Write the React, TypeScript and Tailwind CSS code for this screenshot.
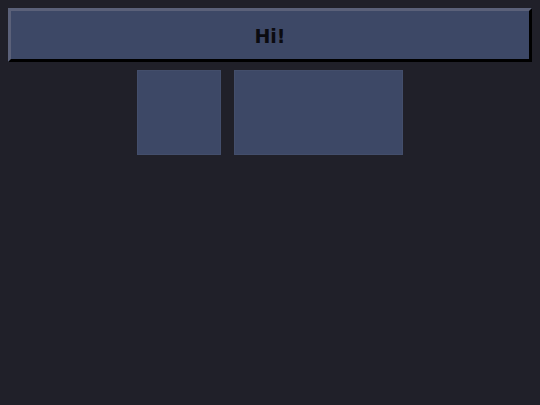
export default function App() {
  return (
    <div className="min-h-[405px] w-full bg-[#202029] p-2" style={{ fontFamily: '"DejaVu Sans", sans-serif' }}>
      <div className="flex h-[54px] items-center justify-center border-[3px] border-t-[#5b6179] border-l-[#5b6179] border-r-black border-b-black bg-[#3d4866] pt-[3px]">
        <span className="text-[19px] font-bold text-[#0b0b10]">Hi!</span>
      </div>
      <div className="mt-[8px] flex justify-center gap-[13px]">
        <div className="h-[85px] w-[84px] border border-[#434e6b] bg-[#3d4866]" />
        <div className="h-[85px] w-[169px] border border-[#434e6b] bg-[#3d4866]" />
      </div>
    </div>
  )
}
